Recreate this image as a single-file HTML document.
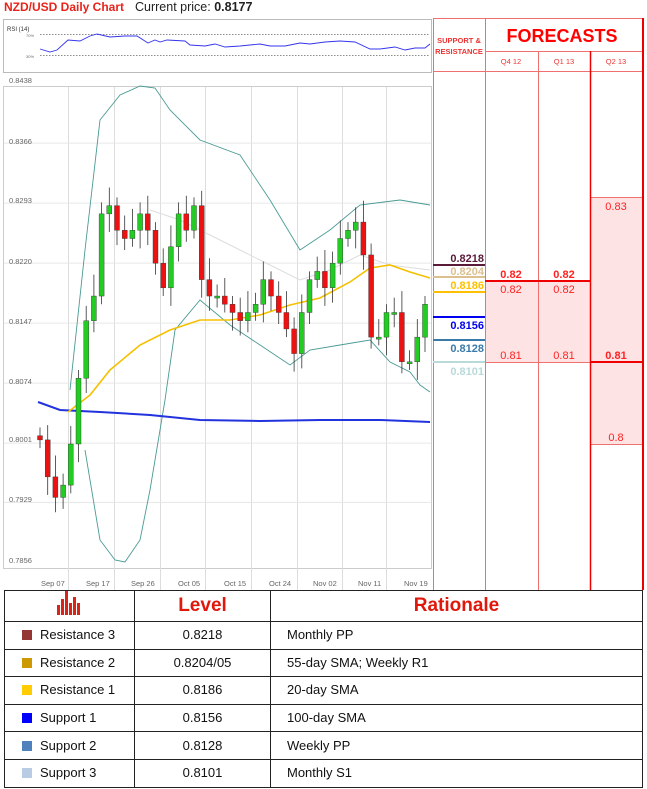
<!DOCTYPE html>
<html><head><meta charset="utf-8"><style>
body{margin:0;width:647px;height:789px;background:#fff;font-family:"Liberation Sans",Arial,sans-serif;overflow:hidden;position:relative}
.t{position:absolute;white-space:nowrap}
table{position:absolute;left:4px;top:590px;border-collapse:collapse;width:639px;table-layout:fixed}
td{border:1.5px solid #222;font-size:13px;color:#111;padding:0;line-height:14px}
td.c{text-align:center}
tr.r{height:27.6px}
.sq{display:inline-block;width:10px;height:10px;margin:0 8px 0 17px;vertical-align:-1px}
th{border:1.5px solid #222;height:29px;color:#e0180c;font-size:19px;font-weight:bold;padding:0}
</style></head><body>
<div class="t" style="left:4px;top:0;font-size:12px;color:#e8231a;font-weight:bold">NZD/USD Daily Chart</div>
<div class="t" style="left:135px;top:0;font-size:12.5px;color:#222">Current price: <b>0.8177</b></div>
<svg width="647" height="600" style="position:absolute;left:0;top:0" font-family="Liberation Sans,Arial,sans-serif">
<rect x="3.5" y="19.5" width="428" height="53" fill="#fff" stroke="#bbb"/>
<text x="7" y="31" font-size="6" fill="#333">RSI (14)</text>
<text x="26" y="37" font-size="4" fill="#666">70%</text><text x="26" y="58" font-size="4" fill="#666">30%</text>
<line x1="40" y1="34.5" x2="430" y2="34.5" stroke="#666" stroke-dasharray="1.5,1.5" stroke-width="0.7"/>
<line x1="40" y1="55.5" x2="430" y2="55.5" stroke="#666" stroke-dasharray="1.5,1.5" stroke-width="0.7"/>
<polyline fill="none" stroke="#3333ee" stroke-width="0.9" points="40,49 50,52 57,50 68,40 80,41 90,36 97,34 110,37 125,36 137,36 148,43 155,40 160,42 167,40 185,41 190,45 205,46 215,44 225,47 240,46 260,44 270,46 285,46 300,43 310,44 325,42 340,41 355,42 370,49 380,49 395,47 405,50 415,48 425,48 430,44"/>
<rect x="3.5" y="86.5" width="428" height="482" fill="#fff" stroke="#ccc"/>
<g id="g"></g>
<g font-size="7.5" fill="#666">
<text x="9" y="83">0.8438</text><text x="9" y="144">0.8366</text><text x="9" y="203">0.8293</text><text x="9" y="264">0.8220</text><text x="9" y="324">0.8147</text><text x="9" y="384">0.8074</text><text x="9" y="442">0.8001</text><text x="9" y="502">0.7929</text><text x="9" y="563">0.7856</text>
<text x="41" y="586">Sep 07</text><text x="86" y="586">Sep 17</text><text x="131" y="586">Sep 26</text><text x="178" y="586">Oct 05</text><text x="224" y="586">Oct 15</text><text x="269" y="586">Oct 24</text><text x="313" y="586">Nov 02</text><text x="358" y="586">Nov 11</text><text x="404" y="586">Nov 19</text>
</g>
<rect x="485" y="281" width="105" height="81" fill="#fde3e3"/>
<rect x="590" y="197" width="53" height="247" fill="#fde3e3"/>
<g stroke="#f07070" stroke-width="1">
<line x1="433.5" y1="18" x2="433.5" y2="590"/><line x1="485.5" y1="18" x2="485.5" y2="590"/><line x1="538.5" y1="51" x2="538.5" y2="590"/>
<line x1="433" y1="18.5" x2="643" y2="18.5"/><line x1="485" y1="51.5" x2="643" y2="51.5"/><line x1="433" y1="71.5" x2="643" y2="71.5"/>
<line x1="485" y1="362.5" x2="590" y2="362.5"/><line x1="590" y1="197.5" x2="643" y2="197.5"/><line x1="590" y1="444.5" x2="643" y2="444.5"/>
</g>
<line x1="590.5" y1="51" x2="590.5" y2="590" stroke="#e00" stroke-width="1.5"/>
<line x1="643" y1="18" x2="643" y2="590" stroke="#e00" stroke-width="2"/>
<line x1="485" y1="281" x2="590" y2="281" stroke="#e00" stroke-width="2"/>
<line x1="590" y1="362" x2="643" y2="362" stroke="#e00" stroke-width="2"/>
<text x="459" y="43" font-size="7.5" fill="#e33" text-anchor="middle" font-weight="bold">SUPPORT &amp;</text>
<text x="459" y="54" font-size="7.5" fill="#e33" text-anchor="middle" font-weight="bold">RESISTANCE</text>
<text x="562" y="42" font-size="18" fill="#f00" text-anchor="middle" font-weight="bold">FORECASTS</text>
<g font-size="7.5" fill="#e33" text-anchor="middle"><text x="511" y="64">Q4 12</text><text x="564" y="64">Q1 13</text><text x="616" y="64">Q2 13</text></g>
<g font-size="11" fill="#f22" text-anchor="middle">
<text x="511" y="278" font-weight="bold">0.82</text><text x="564" y="278" font-weight="bold">0.82</text>
<text x="511" y="293">0.82</text><text x="564" y="293">0.82</text>
<text x="511" y="359">0.81</text><text x="564" y="359">0.81</text><text x="616" y="359" font-weight="bold">0.81</text>
<text x="616" y="210">0.83</text><text x="616" y="441">0.8</text></g>
<g stroke-width="2"><line x1="433" y1="265" x2="485" y2="265" stroke="#5a1a3a"/><line x1="433" y1="277" x2="485" y2="277" stroke="#dcc090"/><line x1="433" y1="292" x2="485" y2="292" stroke="#ffc000"/><line x1="433" y1="317" x2="485" y2="317" stroke="#0000ee"/><line x1="433" y1="340" x2="485" y2="340" stroke="#3a7aaa"/><line x1="433" y1="362" x2="485" y2="362" stroke="#b8dada"/></g>
<g font-size="11" font-weight="bold" text-anchor="end"><text x="484" y="262" fill="#5a1a3a">0.8218</text><text x="484" y="275" fill="#dcc090">0.8204</text><text x="484" y="289" fill="#ffc000">0.8186</text><text x="484" y="329" fill="#0000ee">0.8156</text><text x="484" y="352" fill="#3a7aaa">0.8128</text><text x="484" y="375" fill="#b8dada">0.8101</text></g>
</svg>
<table>
<colgroup><col style="width:130px"><col style="width:136px"><col></colgroup>
<tr style="height:30px"><th><svg width="30" height="24" viewBox="0 0 30 24"><g fill="#d9241a"><rect x="2" y="14" width="3" height="10"/><rect x="6" y="8" width="3" height="16"/><rect x="10" y="0" width="3" height="24"/><rect x="14" y="12" width="3" height="12"/><rect x="18" y="6" width="3" height="18"/><rect x="22" y="12" width="3" height="12"/></g></svg></th><th>Level</th><th>Rationale</th></tr>
<tr class="r"><td><span class="sq" style="background:#943634"></span>Resistance 3</td><td class="c">0.8218</td><td style="padding-left:16px">Monthly PP</td></tr>
<tr class="r"><td><span class="sq" style="background:#cc9900"></span>Resistance 2</td><td class="c">0.8204/05</td><td style="padding-left:16px">55-day SMA; Weekly R1</td></tr>
<tr class="r"><td><span class="sq" style="background:#ffcc00"></span>Resistance 1</td><td class="c">0.8186</td><td style="padding-left:16px">20-day SMA</td></tr>
<tr class="r"><td><span class="sq" style="background:#0000ff"></span>Support 1</td><td class="c">0.8156</td><td style="padding-left:16px">100-day SMA</td></tr>
<tr class="r"><td><span class="sq" style="background:#4f81bd"></span>Support 2</td><td class="c">0.8128</td><td style="padding-left:16px">Weekly PP</td></tr>
<tr class="r"><td><span class="sq" style="background:#b8cce4"></span>Support 3</td><td class="c">0.8101</td><td style="padding-left:16px">Monthly S1</td></tr>
</table>
<script>
var ns="http://www.w3.org/2000/svg",g=document.getElementById('g');
function el(t,a){var e=document.createElementNS(ns,t);for(var k in a)e.setAttribute(k,a[k]);g.appendChild(e);return e}
function Y(p){return 84+(0.8438-p)*8219}
[68,114,160,205,251,297,342,386].forEach(function(x){el('line',{x1:x+.5,y1:87,x2:x+.5,y2:590,stroke:'#ddd'})});
[0.8366,0.8293,0.8220,0.8147,0.8074,0.8001,0.7929].forEach(function(p){el('line',{x1:4,y1:Y(p),x2:431,y2:Y(p),stroke:'#e6e6e6'})});
function pl(pts,c,w){el('polyline',{points:pts,fill:'none',stroke:c,'stroke-width':w})}
pl("150,210 180,220 210,235 240,250 270,265 300,280 330,270 360,255 390,265 430,270","#ddd",1);
pl("70,390 85,250 100,120 120,95 140,86 155,88 170,110 200,140 240,155 270,200 300,250 330,230 360,205 400,200 430,205","#4a9a94",0.9);
pl("85,450 100,540 115,560 125,562 140,540 150,490 165,400 175,330 200,300 230,325 260,345 290,365 310,350 340,345 370,340 390,362 410,372 420,385 430,392","#4a9a94",0.9);
pl("38,402 60,410 100,412 150,415 200,420 260,421 320,420 380,420 430,422","#2233dd",2);
pl("68,412 90,395 110,370 140,345 170,330 200,320 230,320 260,315 290,305 320,298 350,282 370,268 390,265 410,272 430,278","#f5c000",1.6);
var c=[0.8005,0.796,0.7935,0.795,0.800,0.808,0.815,0.818,0.828,0.829,0.826,0.825,0.826,0.828,0.826,0.822,0.819,0.824,0.828,0.826,0.829,0.820,0.818,0.818,0.817,0.816,0.815,0.816,0.817,0.820,0.818,0.816,0.814,0.811,0.816,0.820,0.821,0.819,0.822,0.825,0.826,0.827,0.823,0.813,0.813,0.816,0.816,0.810,0.810,0.813,0.817];
var prev=0.801;
c.forEach(function(p,i){var x=40+i*7.7,o=prev,hi=Math.max(o,p)+0.001+((i*7)%5)*0.0004,lo=Math.min(o,p)-0.001-((i*3)%4)*0.0004;
el('line',{x1:x,y1:Y(hi),x2:x,y2:Y(lo),stroke:'#333','stroke-width':0.8});
var t=Y(Math.max(o,p)),b=Y(Math.min(o,p));if(b-t<2)b=t+2;
el('rect',{x:x-2.5,y:t,width:5,height:b-t,fill:p>=o?'#22cc22':'#ee1111',stroke:'#333','stroke-width':0.4});prev=p;});
</script>
</body></html>
